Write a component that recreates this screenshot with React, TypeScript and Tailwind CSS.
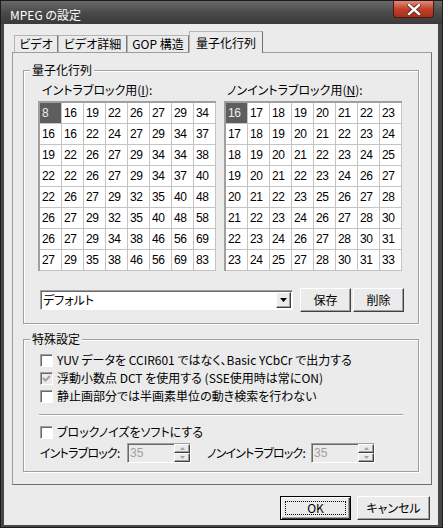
const intra = [
  [8, 16, 19, 22, 26, 27, 29, 34],
  [16, 16, 22, 24, 27, 29, 34, 37],
  [19, 22, 26, 27, 29, 34, 34, 38],
  [22, 22, 26, 27, 29, 34, 37, 40],
  [22, 26, 27, 29, 32, 35, 40, 48],
  [26, 27, 29, 32, 35, 40, 48, 58],
  [26, 27, 29, 34, 38, 46, 56, 69],
  [27, 29, 35, 38, 46, 56, 69, 83],
];

const nonIntra = [
  [16, 17, 18, 19, 20, 21, 22, 23],
  [17, 18, 19, 20, 21, 22, 23, 24],
  [18, 19, 20, 21, 22, 23, 24, 25],
  [19, 20, 21, 22, 23, 24, 26, 27],
  [20, 21, 22, 23, 25, 26, 27, 28],
  [21, 22, 23, 24, 26, 27, 28, 30],
  [22, 23, 24, 26, 27, 28, 30, 31],
  [23, 24, 25, 27, 28, 30, 31, 33],
];

const raised =
  "border border-t-white border-l-white border-r-[#404040] border-b-[#404040] shadow-[inset_-1px_-1px_0_#a0a0a0] bg-[#ebebeb]";
const sunken =
  "border border-t-[#a0a0a0] border-l-[#a0a0a0] border-r-white border-b-white shadow-[inset_1px_1px_0_#696969]";
const etched = "border border-[#a0a0a0] shadow-[inset_1px_1px_0_#fff,1px_1px_0_#fff]";

function Matrix({ data }: { data: number[][] }) {
  return (
    <div className="w-[178px] h-[170px] border-l-2 border-t-2 border-[#a0a0a0] bg-white grid grid-cols-[repeat(8,22px)] font-['Liberation_Sans',sans-serif] tracking-[-0.4px]">
      {data.flat().map((n, i) => (
        <div
          key={i}
          className={`h-[21px] border-r border-b border-[#c4c4c4] pl-[2px] leading-[20px] text-[12px] ${
            i === 0 ? "bg-[#5e5e5e] text-[#eeeeee]" : ""
          }`}
        >
          {n}
        </div>
      ))}
    </div>
  );
}

function Check({ checked, disabled, label }: { checked?: boolean; disabled?: boolean; label: string }) {
  return (
    <div className="flex items-center h-[18px]">
      <div className={`w-[13px] h-[13px] ${sunken} ${disabled ? "bg-[#ebebeb]" : "bg-white"} flex items-center justify-center`}>
        {checked && (
          <svg width="9" height="9" viewBox="0 0 9 9">
            <polyline points="1,4 3.5,6.5 8,2" fill="none" stroke="#a0a0a0" strokeWidth="2" />
          </svg>
        )}
      </div>
      <span className="ml-[4px] whitespace-nowrap">{label}</span>
    </div>
  );
}

function SpinEdit() {
  return (
    <div className={`w-[64px] h-[20px] shrink-0 ${sunken} bg-[#ebebeb] flex`}>
      <span className="flex-1 pl-[2px] pt-[2px] text-[#a0a0a0] font-['Liberation_Sans',sans-serif]">35</span>
      <div className="w-[16px] flex flex-col">
        <div className={`h-[9px] ${raised} flex items-center justify-center`}>
          <svg width="5" height="3" viewBox="0 0 5 3">
            <polygon points="0,3 2.5,0 5,3" fill="#a0a0a0" />
          </svg>
        </div>
        <div className={`h-[9px] ${raised} flex items-center justify-center`}>
          <svg width="5" height="3" viewBox="0 0 5 3">
            <polygon points="0,0 5,0 2.5,3" fill="#a0a0a0" />
          </svg>
        </div>
      </div>
    </div>
  );
}

export default function App() {
  return (
    <div className="w-[443px] h-[528px] bg-[#474747] border border-[#1c1c1c] flex flex-col text-[12px] leading-[14px] text-black font-['Noto_Sans_CJK_JP','Noto_Sans_CJK_SC',sans-serif] [font-feature-settings:'palt']">
      {/* title bar */}
      <div className="h-[23px] flex items-start justify-between bg-linear-to-b from-[#6a6a6a] via-[#4a4a4a] to-[#3a3a3a]">
        <span className="pl-[9px] pt-[7px] text-white">MPEG の設定</span>
        <div className="mr-[8px] w-[41px] h-[17px] rounded-b-[4px] border border-t-0 border-[#4a1710] bg-linear-to-b from-[#e08a78] via-[#c2402a] to-[#a8301c] flex items-center justify-center">
          <svg width="14" height="11" viewBox="0 0 14 11">
            <path d="M2 1 L12 10 M12 1 L2 10" stroke="#5a2418" strokeWidth="4" strokeLinecap="square" />
            <path d="M2 1 L12 10 M12 1 L2 10" stroke="#ffffff" strokeWidth="2.4" strokeLinecap="square" />
          </svg>
        </div>
      </div>

      {/* body */}
      <div className="flex-1 ml-[3px] mr-[4px] mb-[2px] bg-[#ebebeb] flex flex-col pt-[7px] pl-[8px] pr-[6px]">
        {/* tabs */}
        <div className="flex items-end h-[22px] pl-[2px] -mb-px relative z-10">
          <div className="w-[44px] h-[17px] mb-px border-t border-l border-r border-t-[#b4b4b4] border-l-[#b4b4b4] border-r-[#7a7a7a] flex items-center justify-center">ビデオ</div>
          <div className="w-[69px] h-[17px] mb-px border-t border-l border-r border-t-[#b4b4b4] border-l-[#b4b4b4] border-r-[#7a7a7a] flex items-center justify-center">ビデオ詳細</div>
          <div className="w-[62px] h-[17px] mb-px border-t border-l border-r border-t-[#b4b4b4] border-l-[#b4b4b4] border-r-[#7a7a7a] flex items-center justify-center">GOP 構造</div>
          <div className="w-[74px] h-[22px] bg-[#ebebeb] border-t border-l border-r border-t-[#b4b4b4] border-l-[#b4b4b4] border-r-[#6f6f6f] flex items-center justify-center">量子化行列</div>
        </div>

        {/* panel */}
        <div className="w-[420px] h-[433px] border border-[#9d9d9d] border-r-[#6f6f6f] border-b-[#6f6f6f] flex flex-col">
          {/* quantize matrix group */}
          <div className={`relative mt-[17px] ml-[10px] w-[396px] h-[254px] ${etched} pt-[12px] pl-[14px]`}>
            <span className="absolute -top-[8px] left-[6px] px-[2px] bg-[#ebebeb]">量子化行列</span>
            <div className="flex gap-[8px]">
              <div className="flex flex-col">
                <span className="ml-[4px]">
                  イントラブロック用(<u>I</u>):
                </span>
                <div className="mt-[4px]">
                  <Matrix data={intra} />
                </div>
              </div>
              <div className="flex flex-col">
                <span className="ml-[3px]">
                  ノンイントラブロック用(<u>N</u>):
                </span>
                <div className="mt-[4px]">
                  <Matrix data={nonIntra} />
                </div>
              </div>
            </div>
            <div className="flex items-center mt-[17px] h-[24px] pl-[2px]">
              <div className={`w-[253px] h-[20px] ${sunken} bg-white flex items-center`}>
                <span className="flex-1 pl-[2px]">デフォルト</span>
                <div className={`w-[15px] h-[16px] mr-px ${raised} flex items-center justify-center`}>
                  <svg width="7" height="4" viewBox="0 0 7 4">
                    <polygon points="0,0 7,0 3.5,4" fill="#000" />
                  </svg>
                </div>
              </div>
              <button className={`ml-[7px] w-[51px] h-[24px] ${raised}`}>保存</button>
              <button className={`ml-[2px] w-[51px] h-[24px] ${raised}`}>削除</button>
            </div>
          </div>

          {/* special settings group */}
          <div className={`relative mt-[15px] ml-[10px] w-[396px] h-[133px] ${etched} pt-[11px] pl-[16px]`}>
            <span className="absolute -top-[8px] left-[6px] px-[2px] bg-[#ebebeb]">特殊設定</span>
            <Check label="YUV データを CCIR601 ではなく、Basic YCbCr で出力する" />
            <Check checked disabled label="浮動小数点 DCT を使用する (SSE使用時は常にON)" />
            <Check label="静止画部分では半画素単位の動き検索を行わない" />
            <div className="mt-[9px] -ml-px w-[364px] h-[2px] border-t border-[#a0a0a0] border-b border-b-white" />
            <div className="mt-[7px]">
              <Check label="ブロックノイズをソフトにする" />
            </div>
            <div className="mt-[2px] flex items-center h-[20px]">
              <span className="w-[87px] shrink-0 whitespace-nowrap tracking-[-0.8px]">イントラブロック:</span>
              <SpinEdit />
              <span className="ml-[16px] w-[104px] shrink-0 whitespace-nowrap tracking-[-0.8px]">ノンイントラブロック:</span>
              <SpinEdit />
            </div>
          </div>
        </div>

        {/* dialog buttons */}
        <div className="mt-[11px] flex justify-end gap-[6px] pr-[2px]">
          <button className="relative w-[71px] h-[24px] border border-black bg-[#ebebeb] shadow-[inset_1px_1px_0_#fff,inset_-1px_-1px_0_#404040,inset_-2px_-2px_0_#a0a0a0]">
            <span className="absolute inset-[4px] border border-dotted border-black" />
            OK
          </button>
          <button className={`w-[73px] h-[24px] ${raised}`}>キャンセル</button>
        </div>
      </div>
    </div>
  );
}
